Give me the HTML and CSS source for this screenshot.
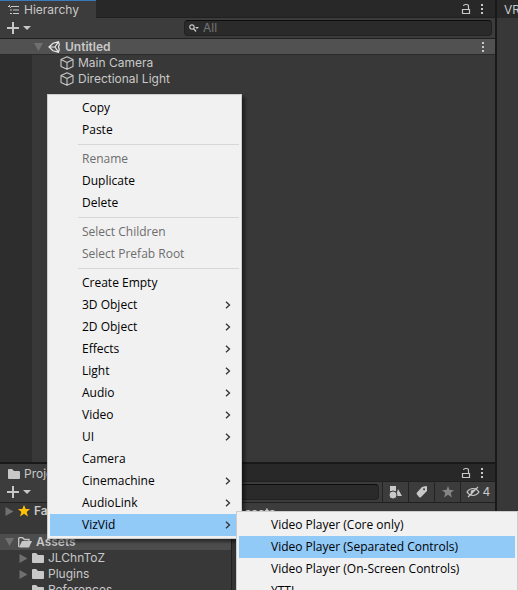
FILE: index.html
```html
<!DOCTYPE html>
<html lang="en">
<head>
<meta charset="utf-8">
<title>Hierarchy</title>
<link rel="stylesheet" href="styles.css">
</head>
<body>
<svg class="defs" aria-hidden="true">
  <symbol id="lock" viewBox="0 0 10 12"><path d="M1.500 6.500h7v4h-7zM7.500 6V3.500Q7.500 1.500 5.500 1.500H4.500Q2.800 1.500 2.500 3" fill="none" stroke="currentColor" stroke-width="1.200"/></symbol>
  <symbol id="dots" viewBox="0 0 4 12"><path d="M1 1h2v2H1zM1 5h2v2H1zM1 9h2v2H1z" fill="currentColor"/></symbol>
  <symbol id="add" viewBox="0 0 24 12"><path d="M5 0h2v5h5v2H7v5H5V7H0V5h5zM16 4h8l-4 4z" fill="currentColor"/></symbol>
  <symbol id="cube" viewBox="0 0 14 14"><path d="M7 .8L13 3.600V10.400L7 13.300L1 10.400V3.600ZM1 3.600L7 6.500L13 3.600M7 6.500V13.300" fill="none" stroke="currentColor" stroke-width="1.100" stroke-linejoin="round"/></symbol>
  <symbol id="folder" viewBox="0 0 12 10"><path d="M0 1Q0 0 1 0H4L6 2H11Q12 2 12 3V9Q12 10 11 10H1Q0 10 0 9Z" fill="currentColor"/></symbol>
  <symbol id="down" viewBox="0 0 9 8"><path d="M0 0h9L4.500 8z" fill="currentColor"/></symbol>
  <symbol id="right" viewBox="0 0 8 9"><path d="M0 0v9l8-4.500z" fill="currentColor"/></symbol>
  <symbol id="star" viewBox="0 0 12 12"><path d="M6 0L7.700 4H12L8.700 7L10 11.500L6 8.800L2 11.500L3.300 7L0 4H4.300Z" fill="currentColor"/></symbol>
  <symbol id="chevron" viewBox="0 0 6 8"><path d="M1 .7L4.500 4L1 7.300" fill="none" stroke="currentColor" stroke-width="1.300"/></symbol>
</svg>
<div class="editor">
  <div class="left">
    <section class="panel">
      <header class="tabs">
        <button class="tab focused"><svg width="12" height="10" viewBox="0 0 12 10"><path d="M3 1.500h8M5 5h6M5 8.500h6" stroke="currentColor" stroke-width="1.200"/><path d="M0 1h2v1H0zM1 0h1v2H1zM2 4.500h2v1H2zM2 8h2v1H2zM2 2h1v1H2z" fill="currentColor"/></svg>Hierarchy</button>
        <button class="tool" aria-label="Lock"><svg width="10" height="12"><use href="#lock"/></svg></button>
        <button class="tool" aria-label="Options"><svg width="4" height="12"><use href="#dots"/></svg></button>
      </header>
      <div class="toolbar">
        <button class="add" aria-label="Create"><svg width="24" height="12"><use href="#add"/></svg></button>
        <label class="search"><svg width="10" height="8" viewBox="0 0 10 8"><circle cx="3" cy="3" r="2.200" fill="none" stroke="currentColor" stroke-width="1.200"/><path d="M4.500 4.500L7 7.500" stroke="currentColor" stroke-width="1.300"/><path d="M6 3h4L8 5z" fill="currentColor"/></svg><input type="search" placeholder="All" aria-label="Search hierarchy"></label>
      </div>
      <div class="row scene">
        <svg class="arrow" width="9" height="8"><use href="#down"/></svg>
        <svg width="12" height="12" viewBox="0 0 12 12"><path d="M1 6L5 2.200L10.500 .800L11.300 3.500L10.500 6L11.300 8.500L10.500 11.200L5 9.800ZM1.500 6H7M7 6L10.300 1.200M7 6L10.300 10.800" fill="none" stroke="#e8e8e8" stroke-width="1.200"/></svg>
        <span class="grow">Untitled</span>
        <button class="tool" aria-label="Scene options"><svg width="4" height="12"><use href="#dots"/></svg></button>
      </div>
      <div class="objects">
        <div class="row"><svg width="14" height="14"><use href="#cube"/></svg>Main Camera</div>
        <div class="row"><svg width="14" height="14"><use href="#cube"/></svg>Directional Light</div>
      </div>
    </section>
    <section class="panel">
      <header class="tabs">
        <button class="tab"><svg width="12" height="10"><use href="#folder"/></svg>Project</button>
        <button class="tool" aria-label="Lock"><svg width="10" height="12"><use href="#lock"/></svg></button>
        <button class="tool" aria-label="Options"><svg width="4" height="12"><use href="#dots"/></svg></button>
      </header>
      <div class="toolbar">
        <button class="add" aria-label="Create"><svg width="24" height="12"><use href="#add"/></svg></button>
        <label class="search"><input type="search" aria-label="Search project"></label>
        <div class="filters">
          <button aria-label="Search by type"><svg width="13" height="13" viewBox="0 0 13 13"><path d="M1 0h6v5H1zM9 3l4 7H7z" fill="currentColor"/><circle cx="4" cy="9" r="4" fill="currentColor" stroke="#3c3c3c"/></svg></button>
          <button aria-label="Search by label"><svg width="12" height="12" viewBox="0 0 12 12"><path fill-rule="evenodd" d="M6 1L10 0Q11 0 11 1V5L5 11Q4 12 3 11L1 8.500Q0 7.500 1 6.500ZM8 2.200A1 1 0 1 0 8.100 4.200A1 1 0 1 0 8 2.200Z" fill="currentColor"/></svg></button>
          <button class="dim" aria-label="Save search"><svg width="12" height="12"><use href="#star"/></svg></button>
          <button class="hidden-count" aria-label="Hidden packages, 4"><svg width="14" height="12" viewBox="0 0 14 12"><path d="M1 6Q3.500 2.500 7 2.500Q10.500 2.500 13 6Q10.500 9.500 7 9.500Q3.500 9.500 1 6ZM2 11L12 1" fill="none" stroke="currentColor" stroke-width="1.200"/><path d="M5 4.500L9 3Q7 5 6 8Q4 7 5 4.500Z" fill="currentColor"/></svg>4</button>
        </div>
      </div>
      <div class="browser">
        <div class="tree">
          <div class="row root favorites"><svg class="arrow" width="8" height="9"><use href="#right"/></svg><svg class="gold" width="12" height="12"><use href="#star"/></svg>Favorites</div>
          <div class="row root open"><svg class="arrow" width="9" height="8"><use href="#down"/></svg><svg width="14" height="11" viewBox="0 0 14 11"><path d="M.7 10V1.500Q.7.700 1.500.700H4.500L6.500 2.500H11V4" fill="none" stroke="currentColor" stroke-width="1.300"/><path d="M4 4h10l-3 6.500H1z" fill="currentColor"/></svg>Assets</div>
          <div class="row child"><svg class="arrow" width="8" height="9"><use href="#right"/></svg><svg width="12" height="10"><use href="#folder"/></svg>JLChnToZ</div>
          <div class="row child"><svg class="arrow" width="8" height="9"><use href="#right"/></svg><svg width="12" height="10"><use href="#folder"/></svg>Plugins</div>
          <div class="row child"><span class="arrow"></span><svg width="12" height="10"><use href="#folder"/></svg>References</div>
        </div>
        <div class="files"><div class="crumb">Assets</div></div>
      </div>
    </section>
  </div>
  <section class="panel side"><header class="tabs"><button class="tab">VRChat</button></header></section>
</div>
<div class="menu context" role="menu">
  <button role="menuitem">Copy</button>
  <button role="menuitem">Paste</button>
  <hr>
  <button role="menuitem" disabled>Rename</button>
  <button role="menuitem">Duplicate</button>
  <button role="menuitem">Delete</button>
  <hr>
  <button role="menuitem" disabled>Select Children</button>
  <button role="menuitem" disabled>Select Prefab Root</button>
  <hr>
  <button role="menuitem">Create Empty</button>
  <button role="menuitem">3D Object<svg width="6" height="8"><use href="#chevron"/></svg></button>
  <button role="menuitem">2D Object<svg width="6" height="8"><use href="#chevron"/></svg></button>
  <button role="menuitem">Effects<svg width="6" height="8"><use href="#chevron"/></svg></button>
  <button role="menuitem">Light<svg width="6" height="8"><use href="#chevron"/></svg></button>
  <button role="menuitem">Audio<svg width="6" height="8"><use href="#chevron"/></svg></button>
  <button role="menuitem">Video<svg width="6" height="8"><use href="#chevron"/></svg></button>
  <button role="menuitem">UI<svg width="6" height="8"><use href="#chevron"/></svg></button>
  <button role="menuitem">Camera</button>
  <button role="menuitem">Cinemachine<svg width="6" height="8"><use href="#chevron"/></svg></button>
  <button role="menuitem">AudioLink<svg width="6" height="8"><use href="#chevron"/></svg></button>
  <button role="menuitem" class="active">VizVid<svg width="6" height="8"><use href="#chevron"/></svg></button>
</div>
<div class="menu submenu" role="menu">
  <button role="menuitem">Video Player (Core only)</button>
  <button role="menuitem" class="active">Video Player (Separated Controls)</button>
  <button role="menuitem">Video Player (On-Screen Controls)</button>
  <button role="menuitem">YTTL</button>
</div>
</body>
</html>
```
FILE: styles.css
```css
* { box-sizing: border-box; }
body {
  margin: 0;
  height: 100vh;
  overflow: hidden;
  position: relative;
  background: #191919;
  color: #c8c8c8;
  font: 12px/16px Inter, sans-serif;
}
button {
  border: 0;
  padding: 0;
  background: none;
  color: inherit;
  font: inherit;
}
svg { flex: none; display: block; }
.defs { position: absolute; width: 0; height: 0; }

.editor { display: flex; gap: 2px; height: 100%; }
.left {
  flex: 1;
  min-width: 0;
  display: grid;
  grid-template-rows: minmax(0, 462fr) minmax(0, 126fr);
  gap: 2px;
}
.panel {
  background: #383838;
  display: flex;
  flex-direction: column;
  overflow: hidden;
}
.side { width: 21px; }

.tabs {
  display: flex;
  height: 18px;
  flex: none;
  gap: 9px;
  align-items: center;
  padding-right: 11px;
  background: #282828;
  border-bottom: 1px solid #202020;
}
.tab {
  display: flex;
  align-items: center;
  gap: 4px;
  width: 96px;
  height: 18px;
  flex: none;
  padding: 2px 8px 0;
  margin-right: auto;
  background: #3c3c3c;
}
.tab.focused { box-shadow: inset 0 1px #3a79bb; }
.side .tab { background: #282828; padding: 2px 7px 0; }

.toolbar {
  display: flex;
  flex: none;
  align-items: center;
  height: 21px;
  padding-left: 7px;
  background: #3c3c3c;
  border-bottom: 1px solid #202020;
}
.add { width: 177px; }
.search {
  flex: 1;
  display: flex;
  align-items: center;
  gap: 4px;
  height: 16px;
  margin-right: 3px;
  padding: 0 4px;
  background: #2a2a2a;
  border: 1px solid #212121;
  border-top-color: #0d0d0d;
  border-radius: 4px;
}
.search input {
  flex: 1;
  min-width: 0;
  padding: 0;
  border: 0;
  outline: 0;
  background: none;
  color: inherit;
  font: inherit;
  line-height: 14px;
}
.search input::placeholder { color: #757575; }
.filters { display: flex; gap: 1px; padding-left: 1px; height: 20px; background: #232323; }
.filters button {
  display: flex;
  align-items: center;
  justify-content: center;
  gap: 3px;
  width: 25px;
  background: #3c3c3c;
}
.filters .dim { color: #858585; }
.filters .hidden-count { width: 34px; }

.row { display: flex; align-items: center; height: 16px; flex: none; gap: 4px; }
.arrow { width: 9px; color: #707070; }
.scene {
  padding: 0 10px 0 34px;
  gap: 5px;
  background: #515151;
  border-bottom: 1px solid #2a2a2a;
  font-weight: 600;
}
.grow { flex: 1; }
.objects { flex: 1; border-left: 32px solid #2d2d2d; padding-left: 28px; }

.browser { display: flex; flex: 1; min-height: 0; }
.tree { width: 232px; overflow: hidden; border-right: 1px solid #202020; }
.root { padding-left: 5px; gap: 4px; font-weight: 600; }
.favorites { margin-bottom: 15px; }
.child { padding-left: 19px; gap: 4px; }
.open { background: #4d4d4d; }
.gold { color: #ffc107; }
.files { flex: 1; background: #333; }
.crumb { height: 18px; padding: 2px 4px 0; background: #3c3c3c; font-weight: 600; }

.menu {
  position: absolute;
  padding: 2px;
  background: #f1f1f1;
  border: 1px solid #ccc;
  box-shadow: 3px 3px 3px rgba(0, 0, 0, .45);
  color: #000;
  font: 12px/22px "Open Sans", sans-serif;
}
.menu button {
  display: flex;
  align-items: center;
  justify-content: space-between;
  width: 100%;
  height: 22px;
  padding: 0 8px 0 32px;
  text-align: left;
  white-space: nowrap;
}
.menu button:disabled { color: #6d6d6d; }
.menu .active { background: #91c9f7; }
.menu svg { color: #333; }
.menu hr { height: 1px; margin: 3px 0 3px 28px; border: 0; background: #d7d7d7; }
.context { left: 47px; top: 94px; width: 195px; }
.submenu { left: 236px; top: 511px; width: 282px; }
```
